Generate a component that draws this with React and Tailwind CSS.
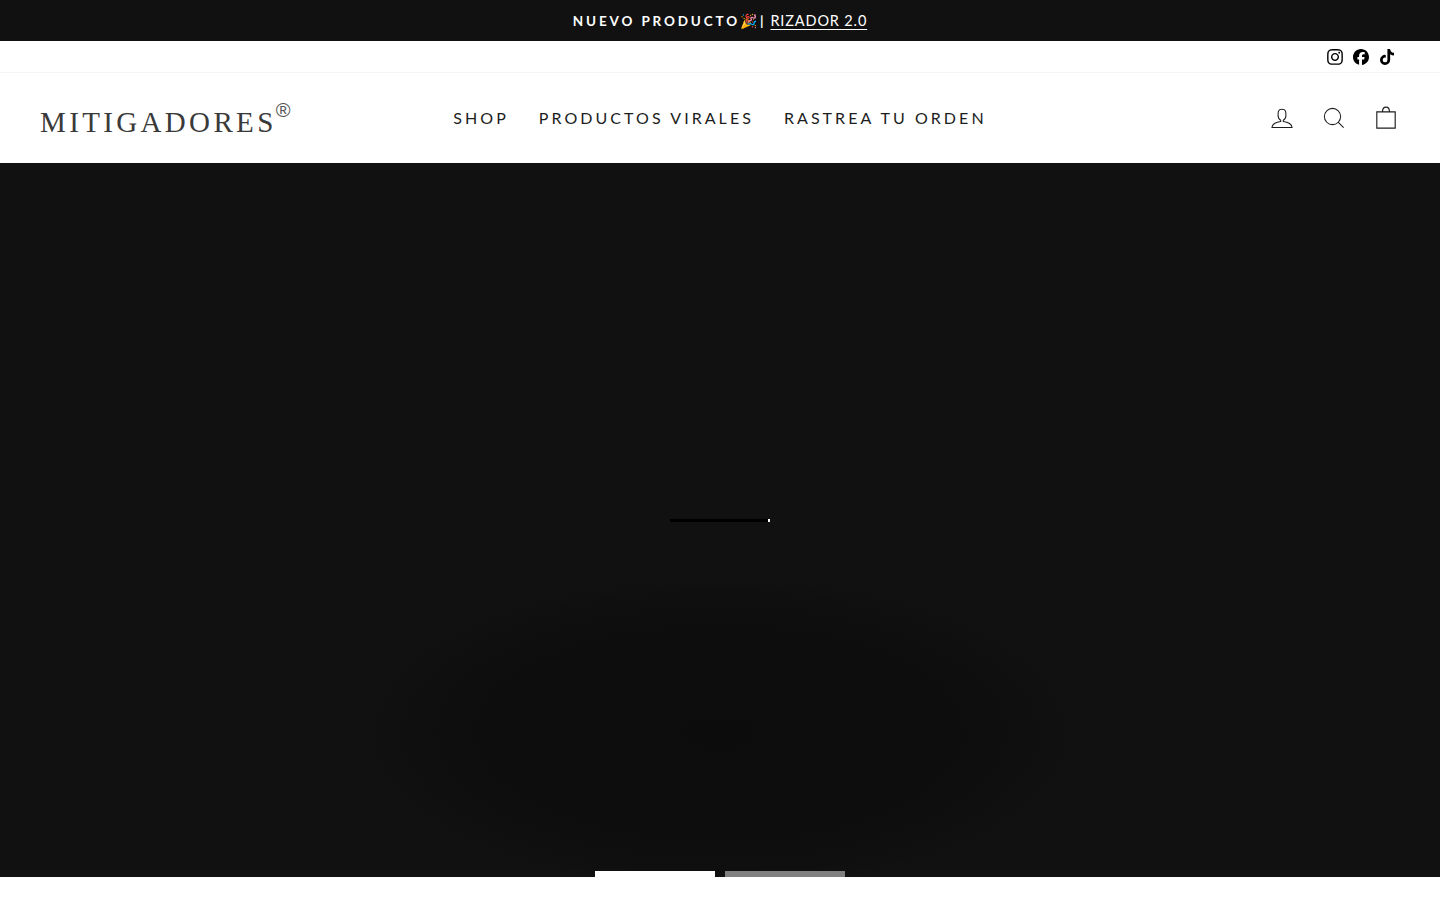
import React from "react";
import { FaInstagram, FaFacebook, FaTiktok } from "react-icons/fa6";

const sans = "font-['Lato','Noto_Sans',sans-serif]";

function Nav({ children }) {
  return <a className="text-[16px] leading-[22px] tracking-[3.05px] font-normal text-[#1c1d1d] whitespace-nowrap">{children}</a>;
}

export default function App() {
  return (
    <div className={`${sans} bg-white min-h-[900px] flex flex-col`}>
      <div className="h-[41px] pt-[1px] bg-[#111111] flex items-center justify-center text-white text-[13.5px]">
        <span className="font-bold tracking-[2.85px]">NUEVO PRODUCTO</span>
        <span className="text-[14px] leading-none">🎉</span>
        <span className="font-bold ml-[3px] mr-[7px]">|</span>
        <a className="underline underline-offset-[3px] decoration-1 text-[14.5px] font-normal tracking-[0.85px]">RIZADOR 2.0</a>
      </div>
      <div className="h-[32px] border-b border-[#f4f4f4] flex items-center justify-end pr-[45px] gap-[10px] text-black">
        <FaInstagram className="w-[18px] h-[18px] -mr-[1px]" />
        <FaFacebook className="w-[16px] h-[16px]" />
        <FaTiktok className="w-[16px] h-[16px]" />
      </div>
      <header className="h-[90px] px-[40px] grid grid-cols-[1fr_auto_1fr] items-center">
        <div className="flex items-start text-[#3a3a3a] font-['Liberation_Serif',serif] pt-[7px]">
          <span className="text-[29px] leading-[40px] tracking-[3.35px]">MITIGADORES</span>
          <span className="text-[20px] leading-[20px] -mt-[2px] -ml-[1px] font-['Liberation_Sans',sans-serif] text-[#555555]">®</span>
        </div>
        <nav className="flex gap-[30px] -mt-[1px]">
          <Nav>SHOP</Nav>
          <Nav>PRODUCTOS VIRALES</Nav>
          <Nav>RASTREA TU ORDEN</Nav>
        </nav>
        <div className="flex items-center justify-end gap-[24px] text-[#1c1d1d]">
          <svg viewBox="0 0 64 64" className="w-[28px] h-[28px]" fill="none" stroke="currentColor" strokeWidth="2.4">
            <path d="M35 39.84v-2.53c3.3-1.91 6-6.66 6-11.41 0-7.63 0-13.81-9-13.81s-9 6.18-9 13.81c0 4.75 2.7 9.51 6 11.41v2.53C17.82 40.77 9 46.59 9 53.6h46c0-7-8.82-12.83-20-13.76z" />
          </svg>
          <svg viewBox="0 0 64 64" className="w-[28px] h-[28px]" fill="none" stroke="currentColor" strokeWidth="2.4">
            <path d="M47.16 28.58A18.58 18.58 0 1 1 28.58 10a18.58 18.58 0 0 1 18.58 18.58zM54 54L41.94 42" />
          </svg>
          <svg viewBox="0 0 64 64" className="w-[28px] h-[28px]" fill="none" stroke="currentColor" strokeWidth="2.6">
            <path d="M11 18h42v37H11z" />
            <path d="M24 18c0-7 3-11 8-11s8 4 8 11" />
          </svg>
        </div>
      </header>
      <section className="h-[714px] bg-[#111111] relative overflow-hidden">
        <div className="absolute left-[370px] top-[415px] w-[700px] h-[310px] rounded-[50%] bg-[radial-gradient(ellipse_closest-side,#0c0c0c_0%,#0d0d0d_60%,#0f0f0f_90%,#111111_100%)]" />
        <div className="absolute left-[670px] top-[356px] w-[100px] h-[3px] bg-black">
          <div className="absolute right-0 top-0 w-[2px] h-[3px] bg-white" />
        </div>
        <div className="absolute bottom-0 left-[595px] flex gap-[10px]">
          <div className="w-[120px] h-[6px] bg-white" />
          <div className="w-[120px] h-[6px] bg-[#808080]" />
        </div>
      </section>
    </div>
  );
}
